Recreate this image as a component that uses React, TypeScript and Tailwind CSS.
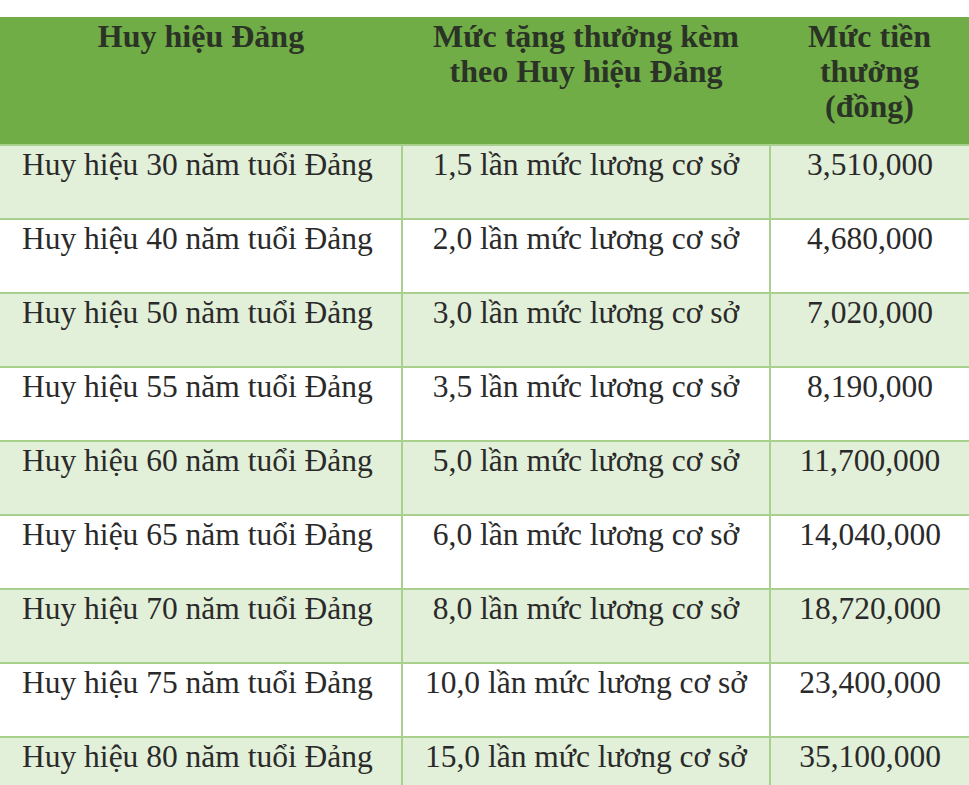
const rows = [
  ["Huy hiệu 30 năm tuổi Đảng", "1,5 lần mức lương cơ sở", "3,510,000"],
  ["Huy hiệu 40 năm tuổi Đảng", "2,0 lần mức lương cơ sở", "4,680,000"],
  ["Huy hiệu 50 năm tuổi Đảng", "3,0 lần mức lương cơ sở", "7,020,000"],
  ["Huy hiệu 55 năm tuổi Đảng", "3,5 lần mức lương cơ sở", "8,190,000"],
  ["Huy hiệu 60 năm tuổi Đảng", "5,0 lần mức lương cơ sở", "11,700,000"],
  ["Huy hiệu 65 năm tuổi Đảng", "6,0 lần mức lương cơ sở", "14,040,000"],
  ["Huy hiệu 70 năm tuổi Đảng", "8,0 lần mức lương cơ sở", "18,720,000"],
  ["Huy hiệu 75 năm tuổi Đảng", "10,0 lần mức lương cơ sở", "23,400,000"],
  ["Huy hiệu 80 năm tuổi Đảng", "15,0 lần mức lương cơ sở", "35,100,000"],
];

export default function App() {
  return (
    <div className="w-[969px] h-[785px] overflow-hidden bg-white pt-[17px] font-['Liberation_Serif','Times_New_Roman',serif] text-[#2a2a2a]">
      <table className="w-full table-fixed border-collapse">
        <colgroup>
          <col className="w-[402px]" />
          <col className="w-[368px]" />
          <col />
        </colgroup>
        <thead>
          <tr className="h-[128px] bg-[#70ad47] text-[#2b3326] text-[32px] font-bold leading-[35px] align-top">
            <th className="pt-[2px] text-center">Huy hiệu Đảng</th>
            <th className="pt-[2px] text-center">Mức tặng thưởng kèm<br />theo Huy hiệu Đảng</th>
            <th className="pt-[2px] text-center">Mức tiền<br />thưởng<br />(đồng)</th>
          </tr>
        </thead>
        <tbody>
          {rows.map((r, i) => (
            <tr key={i} className={`h-[74px] align-top text-[31.5px] leading-[36px] ${i % 2 === 0 ? "bg-[#e2efd9]" : "bg-white"}`}>
              <td className="border-t-2 border-[#a9d18e] pl-[22px] pt-[1px]">{r[0]}</td>
              <td className="border-t-2 border-l-2 border-[#a9d18e] pt-[1px] text-center">{r[1]}</td>
              <td className="border-t-2 border-l-2 border-[#a9d18e] pt-[1px] text-center">{r[2]}</td>
            </tr>
          ))}
        </tbody>
      </table>
    </div>
  );
}
